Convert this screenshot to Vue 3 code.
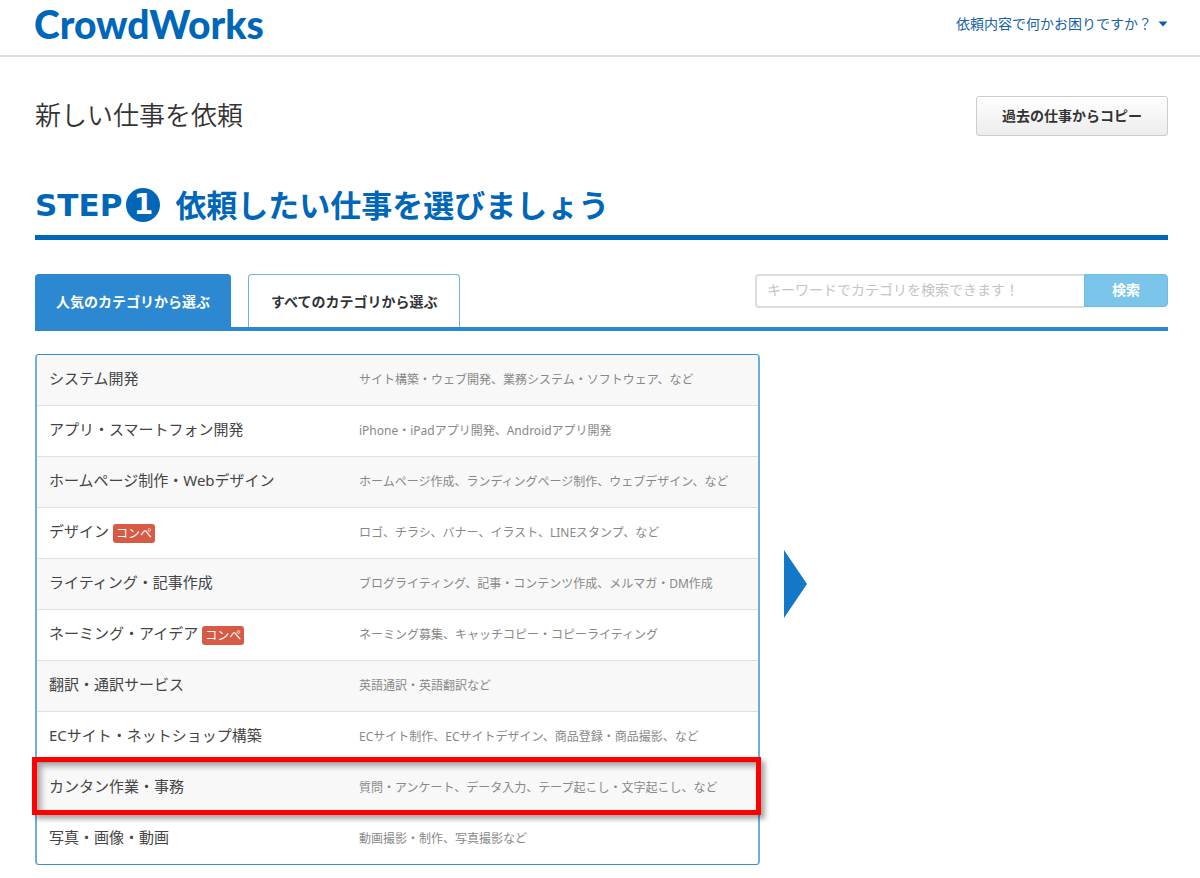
<script setup>
import { ref } from 'vue'

const keyword = ref('')

const categories = [
  { name: 'システム開発', detail: 'サイト構築・ウェブ開発、業務システム・ソフトウェア、など' },
  { name: 'アプリ・スマートフォン開発', detail: 'iPhone・iPadアプリ開発、Androidアプリ開発' },
  { name: 'ホームページ制作・Webデザイン', detail: 'ホームページ作成、ランディングページ制作、ウェブデザイン、など' },
  { name: 'デザイン', badge: 'コンペ', detail: 'ロゴ、チラシ、バナー、イラスト、LINEスタンプ、など' },
  { name: 'ライティング・記事作成', detail: 'ブログライティング、記事・コンテンツ作成、メルマガ・DM作成' },
  { name: 'ネーミング・アイデア', badge: 'コンペ', detail: 'ネーミング募集、キャッチコピー・コピーライティング' },
  { name: '翻訳・通訳サービス', detail: '英語通訳・英語翻訳など' },
  { name: 'ECサイト・ネットショップ構築', detail: 'ECサイト制作、ECサイトデザイン、商品登録・商品撮影、など' },
  { name: 'カンタン作業・事務', detail: '質問・アンケート、データ入力、テープ起こし・文字起こし、など', marked: true },
  { name: '写真・画像・動画', detail: '動画撮影・制作、写真撮影など' },
]
</script>

<template>
  <div class="page">
    <header class="header">
      <a class="logo" href="#">CrowdWorks</a>
      <a class="help" href="#">依頼内容で何かお困りですか？
        <svg width="10" height="6" viewBox="0 0 10 6" aria-hidden="true"><path d="M0.5 0.5h9L5 5.5z" fill="#0b5cab" /></svg>
      </a>
    </header>

    <main class="main">
      <div class="title-row">
        <h1>新しい仕事を依頼</h1>
        <button class="copy" type="button">過去の仕事からコピー</button>
      </div>

      <h2 class="step">
        <span class="step-word">STEP</span>
        <span class="step-number">1</span>
        <span>依頼したい仕事を選びましょう</span>
      </h2>

      <div class="toolbar">
        <nav class="tabs">
          <button class="tab active" type="button">人気のカテゴリから選ぶ</button>
          <button class="tab" type="button">すべてのカテゴリから選ぶ</button>
        </nav>
        <form class="search" @submit.prevent>
          <input v-model="keyword" type="text" aria-label="カテゴリを検索" placeholder="キーワードでカテゴリを検索できます！" />
          <button type="submit">検索</button>
        </form>
      </div>

      <div class="picker">
        <ul class="categories">
          <li v-for="c in categories" :key="c.name" :class="{ marked: c.marked }">
            <a href="#">
              <span class="name">{{ c.name }}<span v-if="c.badge" class="badge">{{ c.badge }}</span></span>
              <span class="detail">{{ c.detail }}</span>
            </a>
          </li>
        </ul>
        <svg class="arrow" width="23" height="68" viewBox="0 0 23 68" aria-hidden="true"><path d="M0 0L23 34L0 68z" fill="#1478c8" /></svg>
      </div>
    </main>
  </div>
</template>

<style>
body {
  margin: 0;
  background: #fff;
}
</style>

<style scoped>
.page,
.page button,
.page input {
  font-family: "Noto Sans", "Noto Sans CJK JP", sans-serif;
}
.page {
  color: #333;
  font-size: 14px;
}
.page * {
  box-sizing: border-box;
}
a {
  color: inherit;
  text-decoration: none;
}
.header {
  display: flex;
  justify-content: space-between;
  align-items: center;
  height: 57px;
  padding: 0 32px 8px 34px;
  border-bottom: 2px solid #dedede;
}
.logo {
  color: #0067b8;
  font-family: Lato, sans-serif;
  font-size: 39px;
  font-weight: 900;
  line-height: 48px;
}
.help {
  display: flex;
  align-items: center;
  gap: 6px;
  color: #1762a8;
  line-height: 24px;
}
.main {
  padding: 39px 32px 13px 35px;
}
.title-row {
  display: flex;
  justify-content: space-between;
  align-items: center;
}
h1 {
  margin: 0;
  padding-bottom: 4px;
  font-family: "Noto Sans CJK JP", sans-serif;
  font-size: 26px;
  font-weight: 350;
  line-height: 36px;
}
.copy {
  height: 40px;
  padding: 0 25px 2px;
  border: 1px solid #ccc;
  border-radius: 3px;
  background: linear-gradient(#fff, #ececec);
  color: #333;
  font-size: 14px;
  font-weight: 700;
}
.step {
  display: flex;
  align-items: center;
  margin: 48px 0 0;
  padding-bottom: 9px;
  border-bottom: 5px solid #0067b8;
  color: #0067b8;
  font-size: 31px;
  font-weight: 700;
  line-height: 42px;
}
.step-word {
  font-family: "DejaVu Sans", sans-serif;
}
.step-number {
  width: 34px;
  height: 34px;
  margin: 0 15px 0 4px;
  border-radius: 50%;
  background: #0067b8;
  color: #fff;
  font-family: "DejaVu Sans", sans-serif;
  font-size: 28px;
  line-height: 34px;
  text-align: center;
}
.toolbar {
  display: flex;
  justify-content: space-between;
  align-items: flex-start;
  margin-top: 34px;
  border-bottom: 4px solid #2c88d1;
}
.tabs {
  display: flex;
  gap: 17px;
}
.tab {
  height: 53px;
  padding: 0 22px;
  border: 1px solid #6db3e4;
  border-bottom: 0;
  border-radius: 4px 4px 0 0;
  background: #fff;
  color: #333;
  font-size: 14px;
  font-weight: 700;
}
.tab.active {
  padding: 0 20px;
  border-color: #2c88d1;
  background: #2c88d1;
  color: #fff;
}
.search {
  display: flex;
  width: 413px;
}
.search input {
  flex: 1;
  min-width: 0;
  height: 34px;
  padding: 0 10px 3px;
  border: 2px solid #dcdcdc;
  border-right: 0;
  border-radius: 4px 0 0 4px;
  font-size: 14px;
}
.search input::placeholder {
  color: #c4c4c4;
}
.search button {
  width: 84px;
  height: 33px;
  padding: 0 0 3px;
  border: 1px solid #6cbce3;
  border-radius: 0 4px 4px 0;
  background: #7ac5e9;
  color: #fff;
  font-size: 14px;
  font-weight: 700;
}
.picker {
  display: flex;
  align-items: flex-start;
  gap: 24px;
  margin-top: 23px;
}
.categories {
  width: 64%;
  margin: 0;
  padding: 0;
  border: 1px solid #3c8fd0;
  border-right: 2px solid #6caedf;
  border-left: 2px solid #6caedf;
  border-radius: 4px;
  list-style: none;
}
.categories li {
  position: relative;
  border-bottom: 1px solid #e0e0e0;
}
.categories li:nth-child(odd) {
  background: #f8f8f8;
}
.categories li:first-child {
  border-radius: 3px 3px 0 0;
}
.categories li:last-child {
  border-bottom: 0;
}
.categories a {
  display: flex;
  align-items: center;
  height: 50px;
  padding-left: 12px;
}
.name {
  display: flex;
  align-items: center;
  gap: 4px;
  width: 310px;
  padding-bottom: 4px;
  color: #444;
  font-size: 15px;
  line-height: 22px;
}
.badge {
  margin-top: 4px;
  padding: 0 3px;
  border-radius: 3px;
  background: #d75a45;
  color: #fff;
  font-size: 12px;
  line-height: 19px;
}
.detail {
  color: #888;
  font-size: 12px;
  line-height: 20px;
  white-space: nowrap;
}
.marked {
  z-index: 1;
}
.marked::after {
  content: "";
  position: absolute;
  inset: -6px -3px -2px -5px;
  border: 5px solid #f00;
  box-shadow: 4px 4px 5px rgba(0, 0, 0, 0.35), inset 4px 4px 6px rgba(0, 0, 0, 0.35);
  pointer-events: none;
}
.arrow {
  flex: none;
  margin-top: 196px;
}
</style>
